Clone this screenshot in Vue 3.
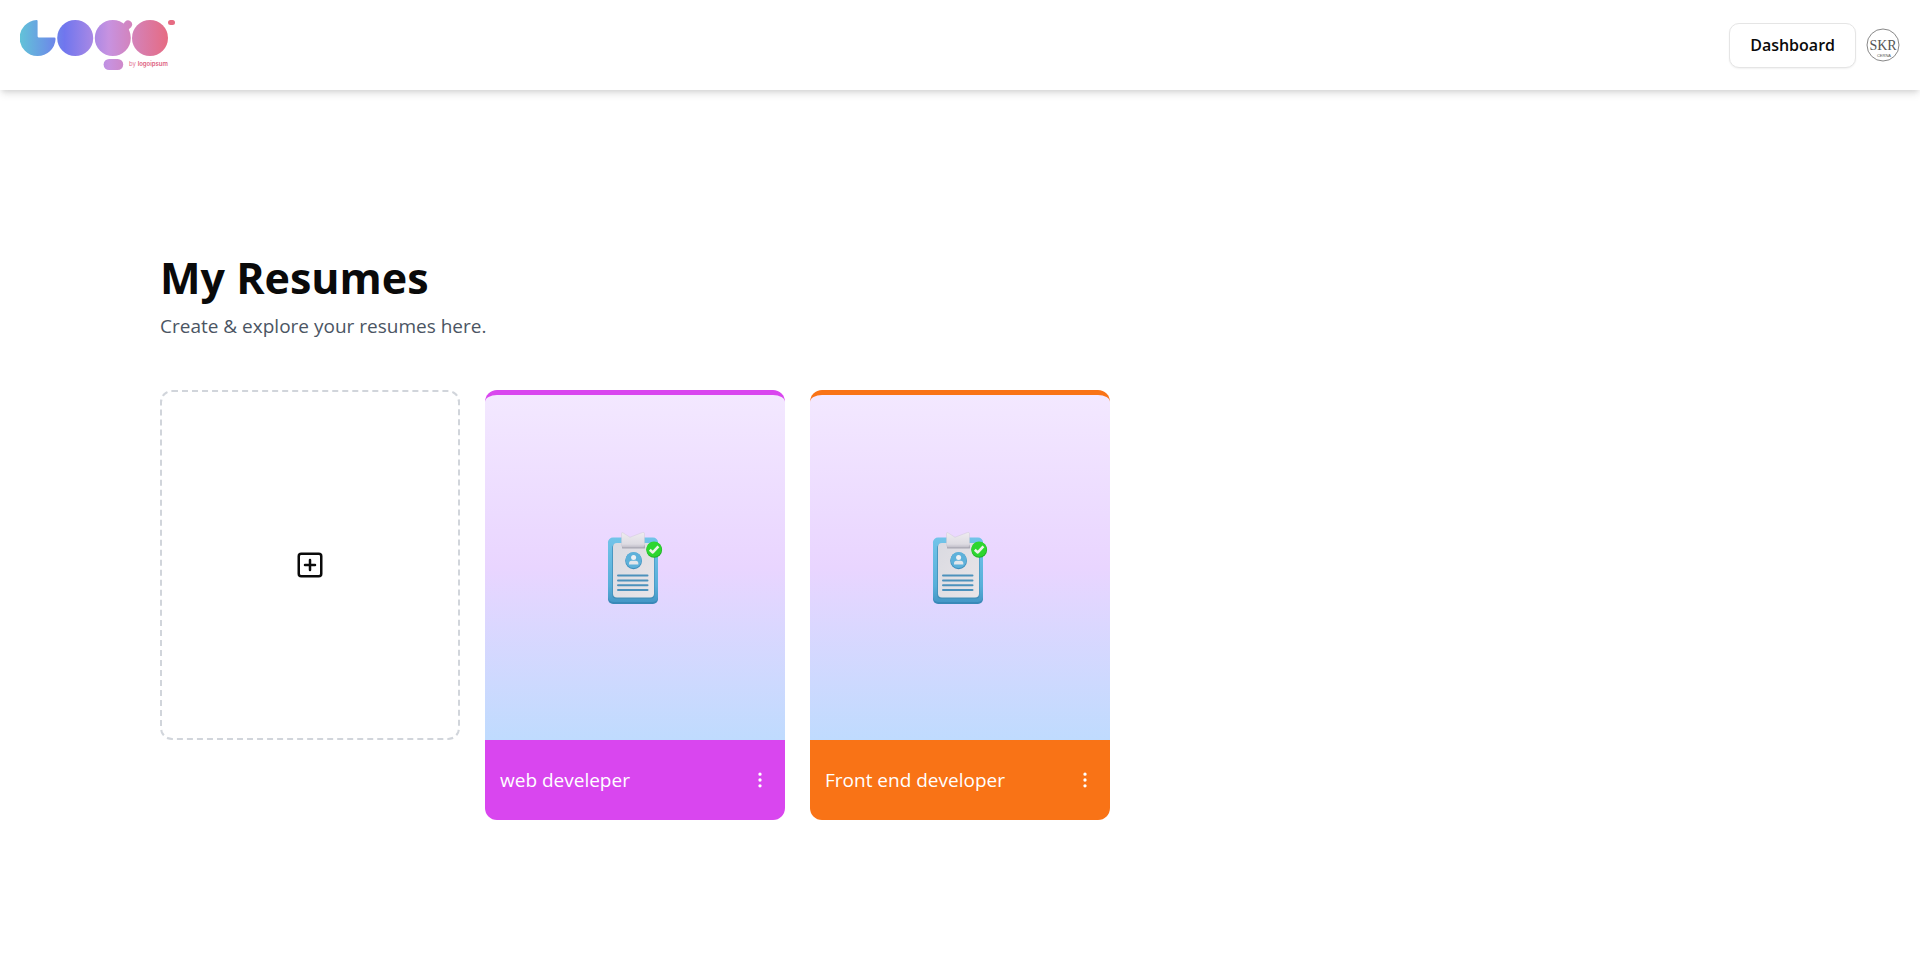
<script setup>
const resumes = [
  { id: 1, title: 'web develeper', theme: 'fuchsia' },
  { id: 2, title: 'Front end developer', theme: 'orange' },
]
</script>

<template>
  <header class="topbar">
    <a href="#" class="brand" aria-label="Logo by logoipsum">
      <svg class="logo" viewBox="0 0 158 50" width="158" height="50">
        <defs>
          <linearGradient id="logo-fill" gradientUnits="userSpaceOnUse" x1="0" y1="0" x2="148" y2="0">
            <stop offset="0" stop-color="#62c3d8" />
            <stop offset="0.3" stop-color="#7076ee" />
            <stop offset="0.6" stop-color="#c792e0" />
            <stop offset="1" stop-color="#e66b82" />
          </linearGradient>
        </defs>
        <g fill="url(#logo-fill)">
          <path d="M16.6 0A18 18 0 1 0 35.6 19Q35.6 17.6 34.2 17.6H19Q17.6 17.6 17.6 16.2V1Q17.6 0 16.6 0Z" />
          <circle cx="55.2" cy="18" r="18" />
          <circle cx="92.8" cy="18" r="18" />
          <path d="M102 5.5L105.2 1.5A4.1 4.1 0 0 1 112 5.6Q111.4 7.4 109.6 8.6Q107.8 9.8 109 13L105 14Z" />
          <circle cx="130" cy="18" r="18" />
          <rect x="148" y="0" width="7" height="5" rx="2.5" />
          <rect x="83.6" y="39" width="19.6" height="11" rx="5.5" />
        </g>
        <text x="109" y="46.3" class="logo-text">by <tspan class="logo-name">logoipsum</tspan></text>
      </svg>
    </a>
    <nav class="actions">
      <button type="button" class="dashboard">Dashboard</button>
      <button type="button" class="avatar" aria-label="Account">
        <svg viewBox="0 0 34 34" width="34" height="34">
          <circle cx="17" cy="17" r="16" fill="#fff" stroke="#888" stroke-width="1" />
          <text x="17" y="22" class="avatar-name">SKR</text>
          <text x="18" y="28.5" class="avatar-sub">CERNA</text>
        </svg>
      </button>
    </nav>
  </header>

  <main class="page">
    <h1>My Resumes</h1>
    <p class="intro">Create &amp; explore your resumes here.</p>

    <div class="grid">
      <button type="button" class="add" aria-label="Create resume">
        <svg viewBox="0 0 24 24" width="30" height="30" class="stroke-icon">
          <rect x="3" y="3" width="18" height="18" rx="2" />
          <path d="M8 12h8M12 8v8" />
        </svg>
      </button>

      <article v-for="resume in resumes" :key="resume.id" class="card" :class="resume.theme">
        <a href="#" class="preview" :aria-label="resume.title">
          <svg viewBox="0 0 80 80" width="80" height="80">
            <defs>
              <linearGradient :id="`board-${resume.id}`" x1="0" y1="0" x2="0" y2="1">
                <stop offset="0" stop-color="#72c4e9" />
                <stop offset="0.75" stop-color="#58afd9" />
                <stop offset="1" stop-color="#4597c6" />
              </linearGradient>
              <linearGradient :id="`paper-${resume.id}`" x1="0" y1="0" x2="1" y2="1">
                <stop offset="0" stop-color="#dadae1" />
                <stop offset="1" stop-color="#e9e5e8" />
              </linearGradient>
              <linearGradient :id="`clip-${resume.id}`" x1="0" y1="0" x2="0" y2="1">
                <stop offset="0" stop-color="#efecf0" />
                <stop offset="0.8" stop-color="#dddbe2" />
                <stop offset="1" stop-color="#c3c1cb" />
              </linearGradient>
            </defs>
            <rect x="13" y="11" width="50" height="65" rx="5" fill="#3989b8" />
            <rect x="13" y="9.5" width="50" height="64.5" rx="5" :fill="`url(#board-${resume.id})`" />
            <rect x="17.2" y="16" width="42.4" height="54.8" rx="4" fill="#438fb9" />
            <rect x="18" y="15" width="41" height="54.5" rx="4" :fill="`url(#paper-${resume.id})`" />
            <path d="M27 17H50V20Q50 20.6 49 20.6H28Q27 20.6 27 20Z" fill="#a9a8b4" />
            <path d="M26.5 5.4Q26.5 4 28 4.8L35 9.2L47.8 4.4Q49.5 4 49.5 5.6V17.6Q49.5 19 48 19H28Q26.5 19 26.5 17.6Z" :fill="`url(#clip-${resume.id})`" stroke="#c9c6d2" stroke-width="0.4" />
            <circle cx="38.6" cy="32.8" r="8.4" fill="#3f8fbd" />
            <circle cx="38.6" cy="32" r="8" fill="#5eb1da" />
            <circle cx="38.6" cy="29.4" r="2.5" fill="#edf0f3" />
            <path d="M34 36.6V35.4Q34 32.8 36.6 32.8H40.7Q43.3 32.8 43.3 35.4V36.6Z" fill="#e2e6eb" />
            <g fill="#4c91bc">
              <rect x="22" y="46.5" width="31.5" height="2" rx="1" />
              <rect x="22" y="51.5" width="31.5" height="2" rx="1" />
              <rect x="22" y="56.2" width="31.5" height="2" rx="1" />
              <rect x="22" y="61" width="31.5" height="2" rx="1" />
            </g>
            <circle cx="59.2" cy="21.8" r="7.9" fill="#20ad27" />
            <circle cx="59" cy="21.2" r="7.6" fill="#2dd62f" />
            <path d="M54.8 21.8L57.8 24.4L63.4 18.4" fill="none" stroke="#edf3e9" stroke-width="2.6" stroke-linejoin="round" />
          </svg>
        </a>
        <footer class="card-footer">
          <h2>{{ resume.title }}</h2>
          <button type="button" class="menu" aria-label="Resume options">
            <svg viewBox="0 0 24 24" width="20" height="20" class="stroke-icon">
              <circle cx="12" cy="5" r="1" />
              <circle cx="12" cy="12" r="1" />
              <circle cx="12" cy="19" r="1" />
            </svg>
          </button>
        </footer>
      </article>
    </div>
  </main>
</template>

<style>
body {
  margin: 0;
  background: #fff;
  color: #0a0a0a;
  font-family: "Open Sans", "Noto Sans", sans-serif;
}
</style>

<style scoped>
* {
  box-sizing: border-box;
}

button {
  padding: 0;
  border: 0;
  background: none;
  color: inherit;
  font: inherit;
  cursor: pointer;
}

svg {
  display: block;
}

.topbar {
  display: flex;
  align-items: center;
  justify-content: space-between;
  height: 90px;
  padding: 0 20px;
  box-shadow: 0 5px 8px -1px rgb(0 0 0 / 0.1), 0 3px 5px -2px rgb(0 0 0 / 0.1);
}

.logo-text {
  fill: #e2708f;
  font-family: Inter, sans-serif;
  font-size: 6px;
}

.logo-name {
  fill: #dd5f80;
  font-weight: 600;
}

.actions {
  display: flex;
  align-items: center;
  gap: 10px;
}

.dashboard {
  height: 45px;
  padding: 0 20px;
  border: 1px solid #e5e5e5;
  border-radius: 10px;
  background: #fff;
  box-shadow: 0 1px 2px rgb(0 0 0 / 0.06);
  font-size: 16px;
  font-weight: 600;
}

.avatar {
  border-radius: 50%;
}

.avatar-name {
  fill: #555;
  font-family: "Liberation Serif", serif;
  font-size: 14px;
  text-anchor: middle;
}

.avatar-sub {
  fill: #555;
  font-family: "Liberation Sans", sans-serif;
  font-size: 4px;
  text-anchor: middle;
}

.page {
  padding: 160px 160px 50px;
}

h1 {
  margin: 0;
  font-size: 43px;
  font-weight: 700;
  line-height: 56px;
}

.intro {
  margin: 0;
  color: #4b5563;
  font-size: 19px;
  line-height: 40px;
}

.grid {
  display: grid;
  grid-template-columns: repeat(5, 1fr);
  align-items: start;
  gap: 25px;
  margin-top: 44px;
}

.add {
  display: flex;
  align-items: center;
  justify-content: center;
  height: 350px;
  border: 2px dashed #d1d5db;
  border-radius: 12px;
}

.stroke-icon {
  fill: none;
  stroke: currentColor;
  stroke-width: 2;
  stroke-linecap: round;
  stroke-linejoin: round;
}

.fuchsia {
  --accent: #d946ef;
}

.orange {
  --accent: #f97316;
}

.preview {
  display: flex;
  align-items: center;
  justify-content: center;
  height: 350px;
  border-top: 5px solid var(--accent);
  border-radius: 12px 12px 0 0;
  background: linear-gradient(to bottom, #f3e8ff, #e9d5ff, #bfdbfe);
}

.card-footer {
  display: flex;
  align-items: center;
  justify-content: space-between;
  height: 80px;
  padding: 0 15px;
  border-radius: 0 0 12px 12px;
  background: var(--accent);
  color: #fff;
}

h2 {
  margin: 0;
  font-size: 19px;
  font-weight: 400;
}
</style>
